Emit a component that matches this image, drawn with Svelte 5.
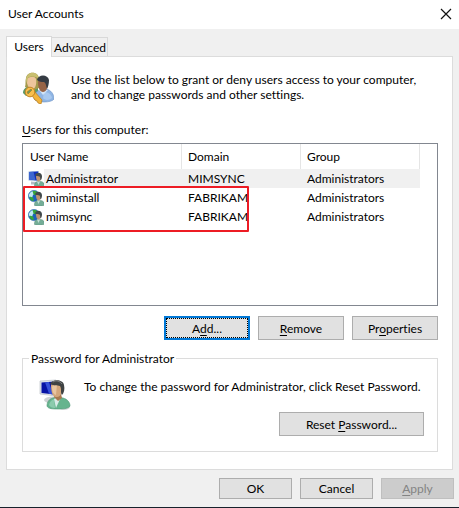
<script>
  const users = [
    { name: 'Administrator', domain: 'MIMSYNC', group: 'Administrators', kind: 'local' },
    { name: 'miminstall', domain: 'FABRIKAM', group: 'Administrators', kind: 'domain' },
    { name: 'mimsync', domain: 'FABRIKAM', group: 'Administrators', kind: 'domain' }
  ];
  let selected = $state('Administrator');
</script>

<svelte:head><title>User Accounts</title></svelte:head>

{#snippet person(shirt, shade)}
  <path d="M8 27c0-4 2-7 6-8l4-1 6 1c4 1 7 4 7 8-1 2-5 3-11 3S9 30 8 27z" fill={shirt} stroke={shade} stroke-width=".6" />
  <path d="M10 26c1-4 3-5 5-6l1 9c-3 0-5-1-6-3z" fill="#9bd4ba" opacity=".7" />
  <path d="M15 20l2 9 4-9-2-2z" fill="#d8ebe8" />
  <path d="M15 15h7l1 4-4 3-4-4z" fill="#a87950" />
  <path d="M12 7c0-5 10-6 11 0 1 5-1 11-5 11-4 1-6-5-6-11z" fill="#d4a67b" />
  <path d="M13 8c1-2 3-3 5-3l-1 11c-3-1-4-4-4-8z" fill="#e8c5a0" />
  <path d="M11 5c2-5 13-5 14 1 1 4 0 8-2 10-2-2 0-6-2-9-3-1-6 0-10-2z" fill="#3f4243" />
  <path d="M14 3c3-2 7-1 9 2" stroke="#7d8080" fill="none" />
{/snippet}

{#snippet monitor()}
  <path d="M1 2l16-1v16L1 15z" fill="#dfe4ea" stroke="#b2b9c1" stroke-width=".6" />
  <path d="M2.500 3.500l13-1v13L2.500 14z" fill="#0713a5" />
  <path d="M6 3.200l4-.3 4 12.500-4-.7z" fill="#3651d8" />
{/snippet}

{#snippet localIcon()}
  <svg width="32" height="32" viewBox="0 0 32 32" aria-hidden="true">
    <ellipse cx="14" cy="21" rx="9" ry="3.500" fill="#ced2d4" />
    <ellipse cx="25" cy="28" rx="6" ry="3" fill="#d5d8d9" />
    {@render monitor()}
    {@render person('#66b48e', '#4b9673')}
  </svg>
{/snippet}

{#snippet rowIcon(kind)}
  <svg width="16" height="16" viewBox="0 0 32 32" aria-hidden="true">
    {#if kind === 'local'}
      <path d="M1 1l21-1v21L1 19z" fill="#a9bfdf" />
      <path d="M2 2l18-1v18L2 17z" fill="#0f2fbd" />
      <path d="M2 2l9-.5 4 17L2 17z" fill="#3d66cf" />
      <path d="M6 21l10 1v5H6z" fill="#b6bdc4" />
    {:else}
      <circle cx="12" cy="12" r="11.500" fill="#1b62bd" stroke="#4b7fae" />
      <path d="M2 9c2-5 6-7 10-7l3 4-5 4-2 6-6-2z" fill="#bfeaf3" />
      <path d="M9 2l7 0 4 4-5 5-4-2zM3 13l7 2 2 6-4 1-4-4z" fill="#36a53c" />
    {/if}
    <path d="M13 31c-1-6 2-9 6-10h7c5 1 7 4 7 9-2 3-18 3-20 1z" fill="#74ad97" stroke="#4f8370" stroke-width=".8" />
    <path d="M18 21l3 7 3-7z" fill="#c3dcd6" />
    <path d="M16 10c0-5 9-5 10 0 1 6-2 11-5 11s-5-5-5-11z" fill="#bd9272" />
    <path d="M14 9c1-7 13-8 14 1 0 4-1 8-3 9-1-3 0-6-2-8-3-1-5 0-9-2z" fill="#41494b" />
  </svg>
{/snippet}

<main>
  <header>
    <h1>User Accounts</h1>
    <button class="close" aria-label="Close">
      <svg width="12" height="12" viewBox="0 0 12 12"><path d="M1 1l10 10M11 1L1 11" stroke="#111" stroke-width="1.200" /></svg>
    </button>
  </header>

  <div class="body">
    <div class="tabs" role="tablist">
      <button class="tab active" role="tab" aria-selected="true">Users</button>
      <button class="tab" role="tab" aria-selected="false">Advanced</button>
    </div>

    <section class="panel" role="tabpanel" aria-label="Users">
      <div class="intro">
        <svg width="32" height="32" viewBox="0 0 32 32" aria-hidden="true">
          <path d="M1 21c0-4 3-6 6-7l9 2v8H4z" fill="#5a9a68" />
          <path d="M3 15c1-3 0-6 1-9 1-7 12-7 13 0v10l-5 2z" fill="#a49a4c" />
          <path d="M5 7c3-3 8-3 9 0 1 6-1 10-4 10s-6-5-5-10z" fill="#edc59c" />
          <path d="M4 8c0-9 12-10 13-1-4-3-8-3-11-1l-1 5z" fill="#c9bf70" />
          <path d="M12 27c0-6 3-8 6-9l6-1c5 1 8 5 8 10-2 4-18 4-20 0z" fill="#8fb5e4" stroke="#6f94c4" stroke-width=".6" />
          <path d="M22 20c4 0 7 2 8 6-3 3-8 2-9 0z" fill="#a9c9ef" />
          <path d="M17 18l4 5 5-5z" fill="#d3e4f6" />
          <path d="M16 10c0-5 9-5 10 0 0 6-2 10-5 10s-5-4-5-10z" fill="#966346" />
          <path d="M15 8c1-6 11-6 12 0 0 4-1 7-2 9-1-3-1-6-3-7-3 0-4 0-7-2z" fill="#353b43" />
          <path d="M9 22l3-3 8 9-1 4-3-1-1-2-2-1z" fill="#f2b43a" stroke="#b87b1c" stroke-width=".7" />
          <circle cx="8" cy="20" r="4.800" fill="#f7bf4d" stroke="#c18424" />
          <path d="M5 20l4-3 1 1-4 4z" fill="#6e9a5c" stroke="#a36c14" stroke-width=".5" />
        </svg>
        <p>Use the list below to grant or deny users access to your computer, and to change passwords and other settings.</p>
      </div>

      <div class="caption" id="users-label"><u>U</u>sers for this computer:</div>
      <div class="list">
        <table aria-labelledby="users-label">
          <thead>
            <tr><th class="name">User Name</th><th class="domain">Domain</th><th class="group">Group</th></tr>
          </thead>
          <tbody>
            {#each users as user}
              <tr class:selected={selected === user.name} onclick={() => (selected = user.name)}>
                <td class="name">
                  <div class="user">
                    {@render rowIcon(user.kind)}
                    <span>{user.name}</span>
                  </div>
                </td>
                <td>{user.domain}</td>
                <td>{user.group}</td>
              </tr>
            {/each}
          </tbody>
        </table>
        <div class="highlight"></div>
      </div>

      <div class="actions">
        <button class="btn focus"><span>A<u>d</u>d...</span></button>
        <button class="btn"><u>R</u>emove</button>
        <button class="btn">Pr<u>o</u>perties</button>
      </div>

      <fieldset>
        <legend>Password for Administrator</legend>
        <div class="reset-info">
          {@render localIcon()}
          <p>To change the password for Administrator, click Reset Password.</p>
        </div>
        <button class="btn reset">Reset <u>P</u>assword...</button>
      </fieldset>
    </section>

    <footer>
      <button class="btn">OK</button>
      <button class="btn">Cancel</button>
      <button class="btn" disabled><u>A</u>pply</button>
    </footer>
  </div>
</main>

<style>
  :global(body) { margin: 0; background: #f0f0f0; }
  main, button { font: 12px/15px Lato, "Open Sans", sans-serif; font-variant-ligatures: none; color: #000; }
  main { background: #f0f0f0; border-bottom: 1px solid #17212b; }
  * { box-sizing: border-box; }
  h1, p { margin: 0; font-size: 12px; font-weight: 400; }
  svg { flex: none; }
  u { text-underline-offset: 2px; text-decoration-thickness: 1px; }
  header { display: flex; justify-content: space-between; align-items: center; height: 29px; padding: 0 7px 2px 8px; background: #fff; }
  .close { display: flex; padding: 0; border: 0; background: none; }
  .body { padding: 7px 5px 8px 6px; }
  .tabs { display: flex; align-items: flex-end; }
  .tab { width: 56px; height: 19px; padding: 0 0 0 1px; border: 1px solid #d9d9d9; border-bottom: 0; border-left: 0; background: #f0f0f0; }
  .tab.active { position: relative; width: 46px; height: 21px; margin-bottom: -1px; padding: 0 0 2px; border-left: 1px solid #d9d9d9; background: #fff; }
  .panel { margin-right: 1px; padding: 15px 14px 17px 15px; border: 1px solid #dcdcdc; background: #fff; }
  .intro { display: flex; gap: 17px; }
  .intro p { max-width: 360px; }
  .caption { margin: 18px 0 6px; }
  .list { position: relative; min-height: 163px; border: 1px solid #828790; }
  table { width: 397px; max-width: 100%; border-collapse: separate; border-spacing: 0; table-layout: fixed; }
  th, td { padding: 0 0 0 6px; text-align: left; font-weight: 400; }
  th { height: 25px; border-right: 1px solid #e5e5e5; }
  th.name { width: 159px; padding-left: 7px; }
  th.domain { width: 119px; }
  td { height: 19px; }
  td.name { padding-left: 5px; }
  .user { display: flex; align-items: center; height: 19px; }
  .user span { flex: 1; padding-left: 2px; line-height: 19px; }
  .selected td, .selected .user span { background: #f0f0f0; }
  .selected td.name { background: none; }
  .highlight { position: absolute; left: 0; top: 42px; width: 226px; height: 46px; border: 2px solid #ed1c24; border-radius: 1px; pointer-events: none; }
  .actions { display: flex; justify-content: flex-end; gap: 8px; margin-top: 10px; }
  .btn { height: 24px; padding: 0; border: 1px solid #adadad; background: #e1e1e1; }
  .actions .btn { width: 86px; }
  .btn.focus { border: 2px solid #0078d7; }
  .focus span { display: flex; justify-content: center; align-items: center; height: 100%; border: 1px dotted #000; white-space: pre; }
  fieldset { min-width: 0; margin: 11px 0 0; padding: 13px 13px 15px 16px; border: 1px solid #dcdcdc; }
  legend { margin-left: -10px; padding: 0 2px; }
  .reset-info { display: flex; gap: 13px; }
  .reset { display: block; width: 145px; margin: 1px 0 0 auto; }
  footer { display: flex; justify-content: flex-end; gap: 8px; margin-top: 8px; }
  footer .btn { width: 73px; height: 21px; }
  .btn:disabled { background: #ccc; border-color: #bfbfbf; color: #838383; }
</style>
